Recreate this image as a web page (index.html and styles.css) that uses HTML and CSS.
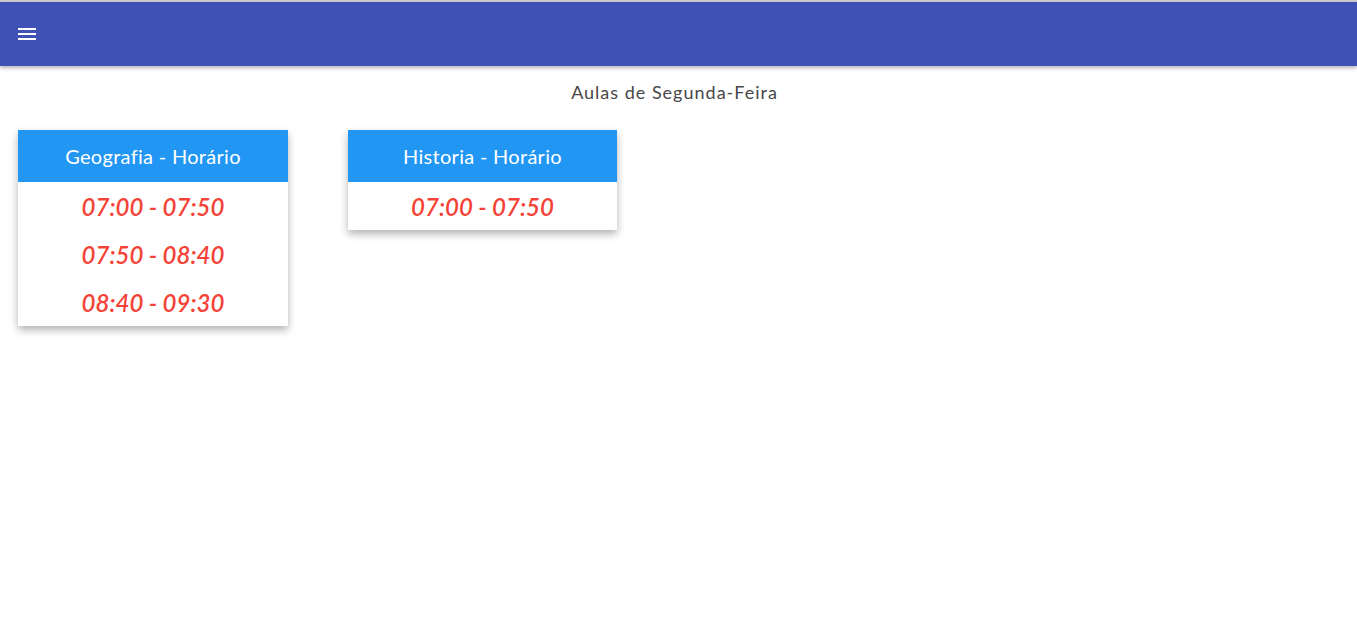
FILE: index.html
```html
<!DOCTYPE html>
<html lang="pt">
<head>
<meta charset="utf-8">
<title>Aulas</title>
<link rel="stylesheet" href="styles.css">
</head>
<body>
<header class="navbar">
  <button class="menu-btn" aria-label="menu">
    <svg width="18" height="12" viewBox="0 0 18 12"><rect x="0" y="0" width="18" height="2" fill="#fff"/><rect x="0" y="5" width="18" height="2" fill="#fff"/><rect x="0" y="10" width="18" height="2" fill="#fff"/></svg>
  </button>
</header>
<main class="content">
  <h1 class="day-title">Aulas de Segunda-Feira</h1>
  <div class="cards">
    <section class="card">
      <div class="card-header">Geografia - Horário</div>
      <ul class="times">
        <li>07:00 - 07:50</li>
        <li>07:50 - 08:40</li>
        <li>08:40 - 09:30</li>
      </ul>
    </section>
    <section class="card card-narrow">
      <div class="card-header">Historia - Horário</div>
      <ul class="times">
        <li>07:00 - 07:50</li>
      </ul>
    </section>
  </div>
</main>
</body>
</html>
```

FILE: styles.css
```css
html, body {
  margin: 0;
  padding: 0;
  background: #fff;
}
body {
  font-family: "Lato", "Open Sans", sans-serif;
  border-top: 2px solid #c9c9c9;
  min-height: 600px;
}
.navbar {
  height: 64px;
  background: #3f51b5;
  box-shadow: 0 2px 4px rgba(0,0,0,0.3);
  display: flex;
  align-items: center;
  padding-left: 18px;
  position: relative;
}
.menu-btn {
  background: none;
  border: 0;
  padding: 0;
  display: flex;
  cursor: pointer;
}
.content {
  padding: 14px 0 60px;
}
.day-title {
  margin: 0 0 26px;
  padding-right: 8px;
  text-align: center;
  font-size: 18px;
  line-height: 24px;
  font-weight: 400;
  letter-spacing: 1px;
  color: #474747;
}
.cards {
  display: flex;
  gap: 60px;
  padding-left: 18px;
  align-items: flex-start;
}
.card {
  width: 270px;
  background: #fff;
  box-shadow: 0 4px 8px rgba(0,0,0,0.3);
}
.card-narrow {
  width: 269px;
}
.card-header {
  height: 52px;
  background: #2196f3;
  color: #fff;
  font-size: 20px;
  letter-spacing: 0.3px;
  display: flex;
  align-items: center;
  justify-content: center;
}
.times {
  list-style: none;
  margin: 0;
  padding: 0;
}
.times li {
  height: 48px;
  display: flex;
  align-items: center;
  justify-content: center;
  color: #f44336;
  font-style: italic;
  font-weight: 600;
  font-size: 24px;
}
```
